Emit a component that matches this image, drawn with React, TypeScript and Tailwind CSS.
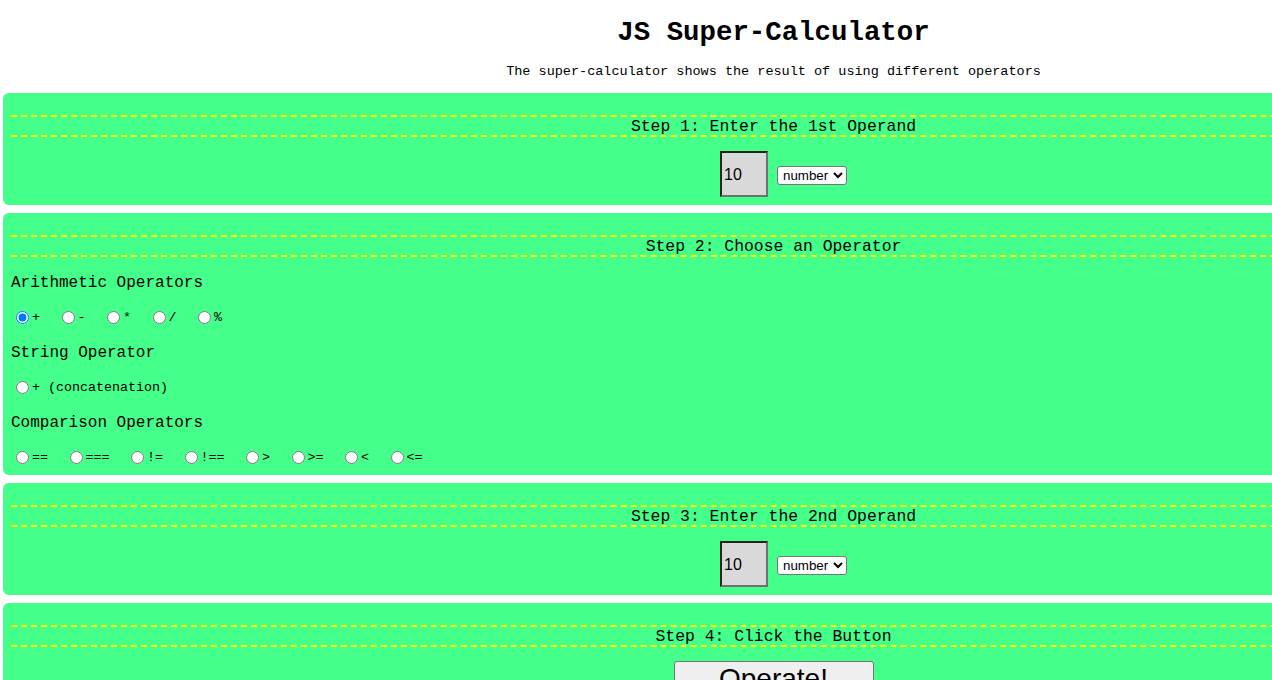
import React from "react";

const mono = "font-['Liberation_Mono','Courier_New',monospace]";
const sans = "font-['Liberation_Sans',Arial,sans-serif]";

function Heading({ children }: { children: React.ReactNode }) {
  return (
    <div className="h-[22px] border-y-2 border-dashed border-[#ffff00] flex items-center justify-center text-[16.4px] leading-[18px] pt-[2px] text-black">
      {children}
    </div>
  );
}

function Operand() {
  return (
    <div className="mt-[14px] pb-[8px] flex justify-center items-center pl-[20px] gap-[9px]">
      <input
        type="text"
        readOnly
        value="10"
        className={`w-[48px] h-[46px] bg-[#d9d9d9] border-2 border-t-[#222222] border-l-[#222222] border-b-[#707070] border-r-[#707070] pl-[2px] pt-[2px] text-[16px] text-black ${sans}`}
      />
      <select
        defaultValue="number"
        className={`mt-[2px] w-[70px] h-[19px] bg-white border border-[#767676] rounded-[3px] text-[13.33px] leading-none text-black pl-[1px] ${sans}`}
      >
        <option value="number">number</option>
        <option value="string">string</option>
      </select>
    </div>
  );
}

function Radio({ label, checked, last }: { label: string; checked?: boolean; last?: boolean }) {
  return (
    <label className={`flex items-center ${last ? "" : "mr-[16.5px]"}`}>
      <input
        type="radio"
        name="op"
        defaultChecked={checked}
        className="ml-[5px] mr-[3px] w-[13px] h-[13px]"
      />
      <span className="text-[13.33px] leading-[15px] pt-[1px] whitespace-pre">{label}</span>
    </label>
  );
}

export default function App() {
  return (
    <div className="w-[1272px] h-[680px] overflow-hidden bg-white">
      <div className={`w-[1547px] text-black ${mono}`}>
        <h1 className="mt-[17px] h-[31px] leading-[31px] text-center text-[27.4px] font-bold">
          JS Super-Calculator
        </h1>
        <p className="mt-[16px] h-[15px] leading-[15px] text-center text-[13.5px]">
          The super-calculator shows the result of using different operators
        </p>
        <div className="mt-[14px] flex flex-col gap-[8px]">
          <div className="mx-[3px] rounded-[6px] bg-[#45ff8b] px-[8px] pt-[22px]">
            <Heading>Step 1: Enter the 1st Operand</Heading>
            <Operand />
          </div>

          <div className="mx-[3px] rounded-[6px] bg-[#45ff8b] px-[8px] pt-[22px] pb-[6px]">
            <Heading>Step 2: Choose an Operator</Heading>
            <div className="mt-[17px] h-[18px] leading-[18px] text-[16px]">Arithmetic Operators</div>
            <div className="mt-[13px] h-[24px] flex items-center">
              <Radio label="+" checked />
              <Radio label="-" />
              <Radio label="*" />
              <Radio label="/" />
              <Radio label="%" last />
            </div>
            <div className="mt-[15px] h-[18px] leading-[18px] text-[16px]">String Operator</div>
            <div className="mt-[13px] h-[24px] flex items-center">
              <Radio label="+ (concatenation)" last />
            </div>
            <div className="mt-[15px] h-[18px] leading-[18px] text-[16px]">Comparison Operators</div>
            <div className="mt-[13px] h-[24px] flex items-center">
              <Radio label="==" />
              <Radio label="===" />
              <Radio label="!=" />
              <Radio label="!==" />
              <Radio label=">" />
              <Radio label=">=" />
              <Radio label="<" />
              <Radio label="<=" last />
            </div>
          </div>

          <div className="mx-[3px] rounded-[6px] bg-[#45ff8b] px-[8px] pt-[22px]">
            <Heading>Step 3: Enter the 2nd Operand</Heading>
            <Operand />
          </div>

          <div className="mx-[3px] rounded-[6px] bg-[#45ff8b] px-[8px] pt-[22px] pb-[20px]">
            <Heading>Step 4: Click the Button</Heading>
            <div className="mt-[14px] flex justify-center">
              <button
                className={`w-[200px] h-[35px] bg-[#efefef] border border-[#767676] rounded-[3px] text-[28px] leading-none text-black ${sans}`}
              >
                Operate!
              </button>
            </div>
          </div>
        </div>
      </div>
    </div>
  );
}
